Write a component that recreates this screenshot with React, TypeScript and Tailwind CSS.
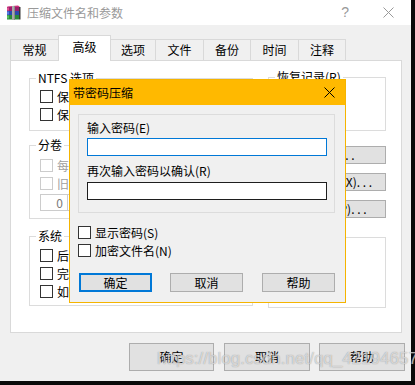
import React from "react";

const cjk = "font-['Noto_Sans_CJK_SC','Microsoft_YaHei',sans-serif]";

function Checkbox({ disabled }: { disabled?: boolean }) {
  return (
    <span
      className={`block w-[13px] h-[13px] shrink-0 border bg-white ${
        disabled ? "border-[#cccccc]" : "border-[#333333]"
      }`}
    />
  );
}

function CheckRow({
  label,
  disabled,
  className = "",
}: {
  label: string;
  disabled?: boolean;
  className?: string;
}) {
  return (
    <div className={`flex items-center gap-[4px] h-[13px] ${className}`}>
      <Checkbox disabled={disabled} />
      <span
        className={`text-[12px] leading-[13px] whitespace-nowrap ${
          disabled ? "text-[#a0a0a0]" : "text-black"
        }`}
      >
        {label}
      </span>
    </div>
  );
}

function Group({
  label,
  className = "",
  children,
}: {
  label?: string;
  className?: string;
  children?: React.ReactNode;
}) {
  return (
    <div className={`relative border border-[#dcdcdc] ${className}`}>
      {label && (
        <span className="absolute -top-[8px] left-[6px] bg-white px-[2px] text-[12px] leading-[14px] text-black whitespace-nowrap">
          {label}
        </span>
      )}
      {children}
    </div>
  );
}

function Tab({ label, w, active }: { label: string; w: string; active?: boolean }) {
  return (
    <div
      className={`${w} -ml-px first:ml-0 flex items-center justify-center border border-[#d9d9d9] text-[12px] text-black ${
        active ? "relative z-10 h-[26px] bg-white border-b-0 pb-[3px]" : "h-[22px] bg-[#f0f0f0]"
      }`}
    >
      {label}
    </div>
  );
}

function WinButton({
  label,
  className = "",
  primary,
}: {
  label: string;
  className?: string;
  primary?: boolean;
}) {
  return (
    <div
      className={`flex items-center justify-center bg-[#e1e1e1] text-[12px] text-black whitespace-nowrap ${
        primary ? "border-2 border-[#0078d7]" : "border border-[#adadad]"
      } ${className}`}
    >
      {label}
    </div>
  );
}

function RarIcon() {
  return (
    <svg width="16" height="16" viewBox="0 0 16 16">
      <path d="M1 1.5 L12 0.5 L14 2 L3 3 Z" fill="#d0307a" />
      <rect x="1" y="2" width="12" height="4" fill="#9b1f6e" />
      <rect x="1" y="2.5" width="2" height="3" fill="#e05090" />
      <rect x="1" y="6" width="12" height="4" fill="#2b4bb0" />
      <rect x="1" y="6.5" width="2" height="3" fill="#5a7ce0" />
      <rect x="1" y="10" width="12" height="4.5" fill="#2a8a3a" />
      <rect x="1" y="10.5" width="2" height="3" fill="#55c060" />
      <rect x="13" y="2" width="1.5" height="12.5" fill="#3a3a3a" />
      <rect x="6" y="1" width="3" height="14" fill="#8a8a8a" />
      <rect x="6.5" y="1" width="1" height="14" fill="#c8c8c8" />
    </svg>
  );
}

function XIcon({ color, size = 11 }: { color: string; size?: number }) {
  return (
    <svg width={size} height={size} viewBox="0 0 11 11">
      <path d="M0.5 0.5 L10.5 10.5 M10.5 0.5 L0.5 10.5" stroke={color} strokeWidth="1" />
    </svg>
  );
}

export default function App() {
  return (
    <div className={`relative w-[415px] h-[385px] overflow-hidden bg-[#0a0a0a] ${cjk}`}>
      {/* main window */}
      <div className="w-[411px] h-[381px] bg-[#f0f0f0] flex flex-col">
        {/* title bar */}
        <div className="h-[25px] bg-white flex items-center shrink-0">
          <div className="ml-[6px]">
            <RarIcon />
          </div>
          <span className="ml-[5px] text-[12px] text-[#999999] leading-[14px]">压缩文件名和参数</span>
          <span className="ml-auto mr-[34px] text-[14px] text-[#999999] font-['Liberation_Sans',sans-serif]">?</span>
          <div className="mr-[17px]">
            <XIcon color="#999999" />
          </div>
        </div>

        {/* tabs */}
        <div className="flex items-end pl-[10px] mt-[10px] h-[26px]">
          <Tab label="常规" w="w-[49px]" />
          <Tab label="高级" w="w-[53px]" active />
          <Tab label="选项" w="w-[46px]" />
          <Tab label="文件" w="w-[49px]" />
          <Tab label="备份" w="w-[48px]" />
          <Tab label="时间" w="w-[49px]" />
          <Tab label="注释" w="w-[48px]" />
        </div>

        {/* tab panel */}
        <div className="-mt-px ml-[10px] w-[392px] h-[273px] bg-white border border-[#d9d9d9] flex pl-[18px] pt-[17px]">
          <div className="w-[224px] flex flex-col">
            <Group label="NTFS 选项" className="h-[53px] pl-[10px] pt-[11px]">
              <CheckRow label="保存文件安全数据" />
              <CheckRow label="保存文件流数据" className="mt-[5px]" />
            </Group>
            <Group label="分卷" className="mt-[14px] h-[74px] pl-[10px] pt-[13px]">
              <CheckRow label="每个分卷之后暂停" disabled />
              <CheckRow label="旧风格分卷名" disabled className="mt-[5px]" />
              <div className="mt-[4px] w-[80px] h-[17px] border border-[#cccccc] flex">
                <span className="w-[26px] pr-[4px] text-right text-[12px] leading-[15px] text-[#7a7a7a]">0</span>
                <span className="border-l border-[#cccccc] flex-1" />
              </div>
            </Group>
            <Group label="系统" className="mt-[17px] h-[70px] pl-[10px] pt-[12px]">
              <CheckRow label="后台压缩" />
              <CheckRow label="完成操作后关闭计算机电源" className="mt-[5px]" />
              <CheckRow label="如果其它 WinRAR 副本活动则等待" className="mt-[5px]" />
            </Group>
          </div>

          <div className="ml-[15px] w-[118px] flex flex-col -mt-px">
            <Group label="恢复记录(R)" className="h-[54px]" />
            <WinButton label="压缩(C). . ." className="mt-[15px] h-[18px]" />
            <WinButton label="自解压选项(X). . ." className="mt-[9px] h-[18px]" />
            <WinButton label="设置密码(P). . ." className="mt-[9px] h-[18px]" />
            <Group label="锁定" className="mt-[19px] h-[71px]" />
          </div>
        </div>

        {/* bottom buttons */}
        <div className="mt-[10px] flex justify-end pr-[6px]">
          <WinButton label="确定" className="w-[85px] h-[28px] border-[#adadad]" />
          <WinButton label="取消" className="ml-[10px] w-[86px] h-[28px]" />
          <WinButton label="帮助" className="ml-[9px] w-[86px] h-[28px]" />
        </div>
      </div>

      {/* password dialog */}
      <div className="absolute left-[69px] top-[79px] w-[277px] h-[224px] border border-[#f5b400] bg-[#f0f0f0] flex flex-col">
        <div className="h-[25px] bg-[#ffb900] flex items-center shrink-0">
          <span className="ml-[3px] text-[12px] text-black leading-[14px]">带密码压缩</span>
          <div className="ml-auto mr-[10px]">
            <XIcon color="#000000" />
          </div>
        </div>

        <div className="ml-[8px] mt-[9px] w-[257px] h-[99px] border border-[#dcdcdc] pl-[8px] pt-[6px] flex flex-col">
          <span className="text-[12px] leading-[14px] text-black">输入密码(E)</span>
          <div className="mt-[3px] w-[240px] h-[18px] bg-white border border-[#0078d7]" />
          <span className="mt-[8px] text-[12px] leading-[14px] text-black">再次输入密码以确认(R)</span>
          <div className="mt-[4px] w-[240px] h-[18px] bg-white border border-[#1e1e1e]" />
        </div>

        <div className="ml-[8px] mt-[13px] flex flex-col">
          <CheckRow label="显示密码(S)" />
          <CheckRow label="加密文件名(N)" className="mt-[5px]" />
        </div>

        <div className="ml-[9px] mt-[16px] flex">
          <WinButton label="确定" primary className="w-[73px] h-[19px]" />
          <WinButton label="取消" className="ml-[18px] w-[73px] h-[19px]" />
          <WinButton label="帮助" className="ml-[19px] w-[73px] h-[19px]" />
        </div>
      </div>

      {/* watermark */}
      <span className="absolute left-[157px] top-[349px] text-[17px] leading-[20px] text-white/60 font-['Liberation_Sans',sans-serif] [text-shadow:0_0_1px_rgba(80,80,80,0.6)] whitespace-nowrap">
        https://blog.csdn.net/qq_42194657
      </span>
    </div>
  );
}
